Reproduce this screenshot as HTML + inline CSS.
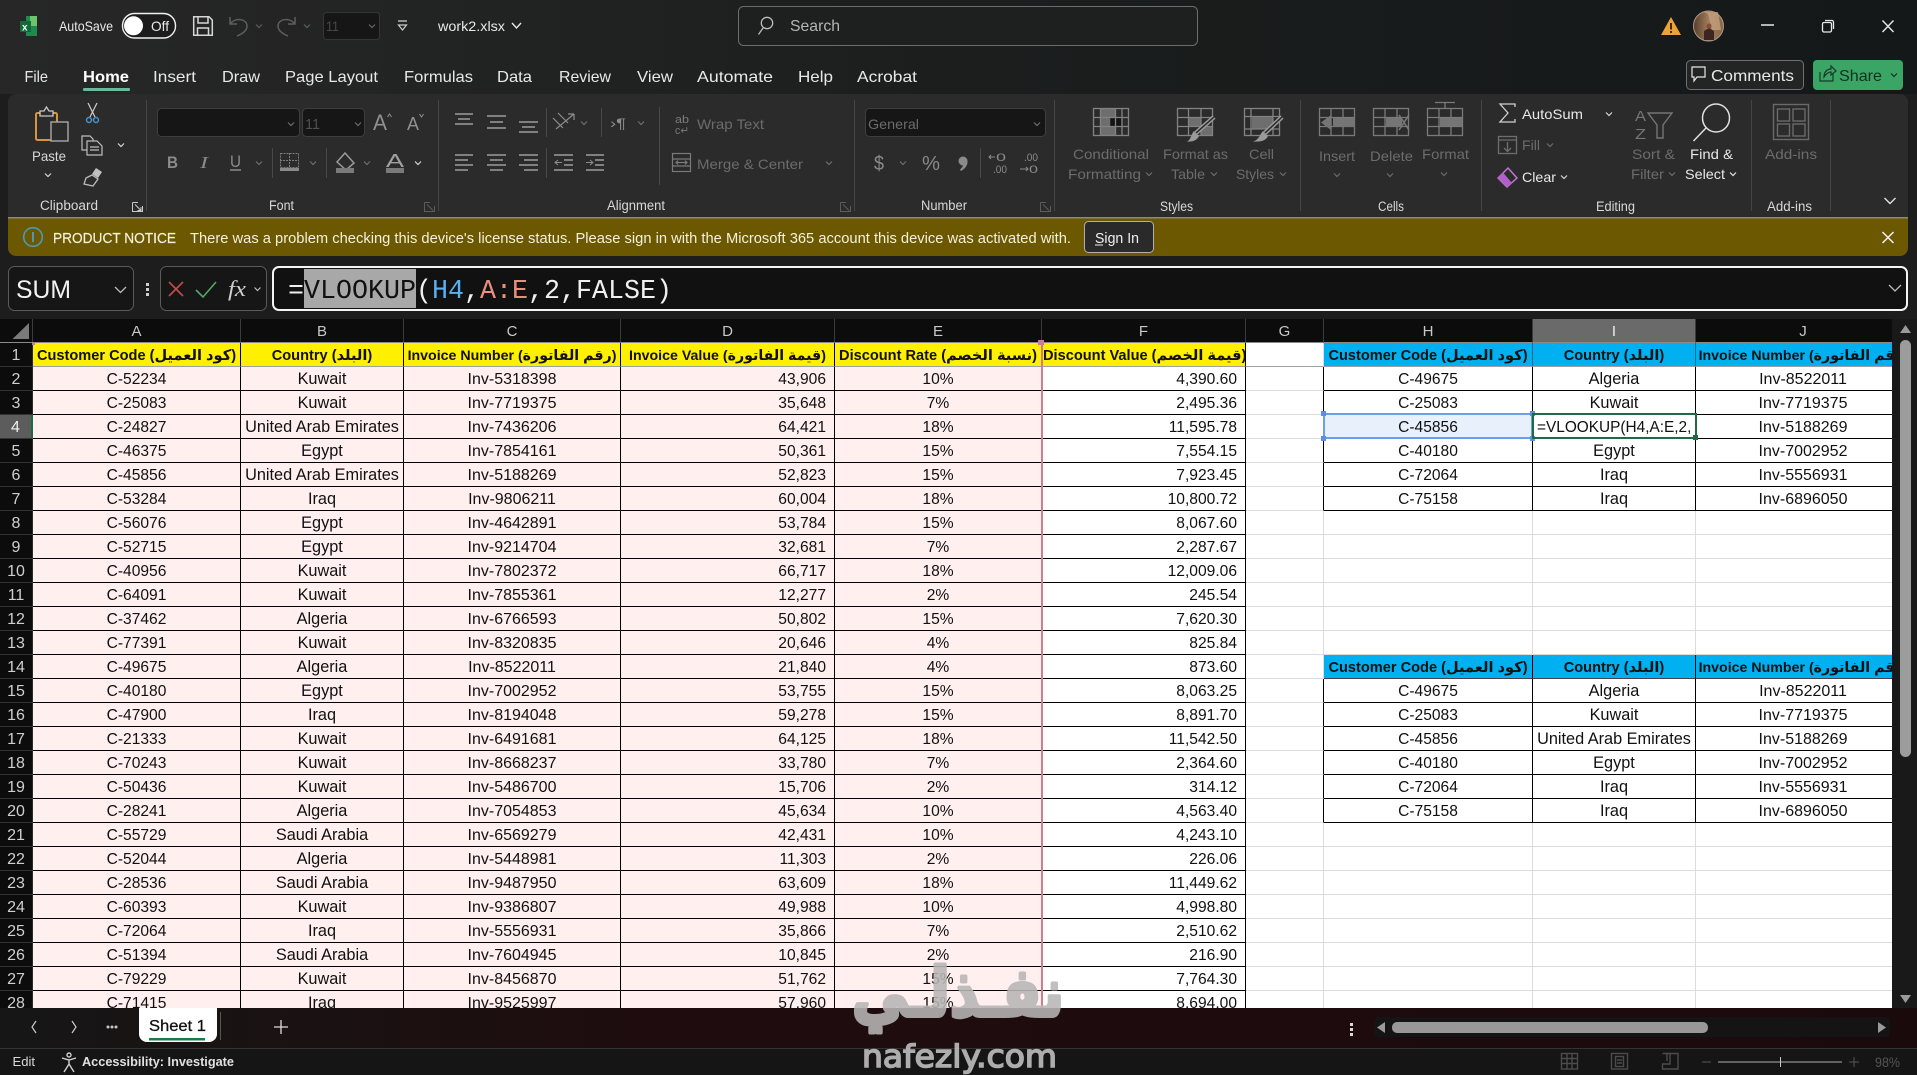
<!DOCTYPE html>
<html><head><meta charset="utf-8"><title>work2.xlsx</title>
<style>
html,body{margin:0;padding:0;background:#1e1e1e;width:1917px;height:1075px;overflow:hidden}
#g{position:absolute;left:0;top:319px;border-collapse:separate;border-spacing:0;table-layout:fixed;width:1911px;background:#fff}
#g td,#g th{height:24px;box-sizing:border-box;padding:2px 0 0;overflow:hidden;white-space:nowrap;font:15.6px "Liberation Sans","DejaVu Sans",sans-serif;color:#111;text-align:center;vertical-align:middle;border-right:1px solid #000;border-bottom:1px solid #000}
#g thead th{background:#0c0c0c;color:#c8c8c8;font-size:15px;font-weight:400;border-right:1px solid #3c3c3c;border-bottom:1px solid #8a8a8a}
#g thead th.s{background:#6a6a6a;color:#eee}
#g tbody th{background:#0c0c0c;color:#cfcfcf;font-weight:400;font-size:16px;border-right:1px solid #2a2a2a;border-bottom:1px solid #333}
#g tbody th.s{background:#5c5c5c;color:#f0f0f0;border-right:2px solid #1d6b42}
#g tbody td:nth-child(-n+6){background:#ffefef}
#g tbody td:nth-child(3),#g tbody td:nth-child(10){font-size:16.3px}
#g tbody td:nth-child(4),#g tbody td:nth-child(11){font-size:16px}
#g tbody td:nth-child(5),#g tbody td:nth-child(7){text-align:right;padding-right:8px}
#g tbody td:nth-child(n+8){border-color:#dcdcdc}
#g tr.t td:nth-child(n+9){border-color:#000}
#g tr.t td:nth-child(8){border-right-color:#000}
#g tr.y td{background:#ffef00;font-weight:700;font-size:14.6px;color:#111;border-bottom-color:#a0a0a0;text-align:center;padding:2px 1px 0}
#g tr.y td:nth-child(8){background:#fff;border-right-color:#dcdcdc}
#g tr.y td:nth-child(n+9){background:#00b0f0;border-bottom-color:#a0a0a0;border-right-color:#0a6a90}
#g tr.b td:nth-child(n+9){background:#00b0f0;font-weight:700;font-size:14.6px;border-color:#000;border-bottom-color:#444;padding:2px 1px 0}
#g tr.y td:nth-child(4),#g tr.y td:nth-child(5),#g tr.y td:nth-child(11),#g tr.b td:nth-child(11){font-size:14.2px}
#g td.h4{background:#e8f0fc!important}
#g td.i4{text-align:left!important;padding-left:4px!important;font-size:15.4px!important}
svg{position:absolute;left:0;top:0;font-family:"Liberation Sans","DejaVu Sans",sans-serif}
.w{fill:#e8e8e8}.d{fill:#6c6c6c}.l{fill:#d8d8d8}
text{font-size:14px}
.tb{font-size:15.6px;fill:#e8e8e8}
</style></head><body>
<table id="g"><colgroup><col style="width:33px"><col style="width:208px"><col style="width:163px"><col style="width:217px"><col style="width:214px"><col style="width:207px"><col style="width:204px"><col style="width:78px"><col style="width:209px"><col style="width:163px"><col style="width:215px"></colgroup>
<thead><tr><th></th><th>A</th><th>B</th><th>C</th><th>D</th><th>E</th><th>F</th><th>G</th><th>H</th><th class="s">I</th><th>J</th></tr></thead>
<tbody>
<tr class="y"><th>1</th><td>Customer Code (كود العميل)</td><td>Country (البلد)</td><td>Invoice Number (رقم الفاتورة)</td><td>Invoice Value (قيمة الفاتورة)</td><td>Discount Rate (نسبة الخصم)</td><td>Discount Value (قيمة الخصم)</td><td></td><td>Customer Code (كود العميل)</td><td>Country (البلد)</td><td>Invoice Number (رقم الفاتورة)</td></tr>
<tr class="t"><th>2</th><td>C-52234</td><td>Kuwait</td><td>Inv-5318398</td><td>43,906</td><td>10%</td><td>4,390.60</td><td></td><td>C-49675</td><td>Algeria</td><td>Inv-8522011</td></tr>
<tr class="t"><th>3</th><td>C-25083</td><td>Kuwait</td><td>Inv-7719375</td><td>35,648</td><td>7%</td><td>2,495.36</td><td></td><td>C-25083</td><td>Kuwait</td><td>Inv-7719375</td></tr>
<tr class="t"><th class="s">4</th><td>C-24827</td><td>United Arab Emirates</td><td>Inv-7436206</td><td>64,421</td><td>18%</td><td>11,595.78</td><td></td><td class="h4">C-45856</td><td class="i4">=VLOOKUP(H4,A:E,2,</td><td>Inv-5188269</td></tr>
<tr class="t"><th>5</th><td>C-46375</td><td>Egypt</td><td>Inv-7854161</td><td>50,361</td><td>15%</td><td>7,554.15</td><td></td><td>C-40180</td><td>Egypt</td><td>Inv-7002952</td></tr>
<tr class="t"><th>6</th><td>C-45856</td><td>United Arab Emirates</td><td>Inv-5188269</td><td>52,823</td><td>15%</td><td>7,923.45</td><td></td><td>C-72064</td><td>Iraq</td><td>Inv-5556931</td></tr>
<tr class="t"><th>7</th><td>C-53284</td><td>Iraq</td><td>Inv-9806211</td><td>60,004</td><td>18%</td><td>10,800.72</td><td></td><td>C-75158</td><td>Iraq</td><td>Inv-6896050</td></tr>
<tr><th>8</th><td>C-56076</td><td>Egypt</td><td>Inv-4642891</td><td>53,784</td><td>15%</td><td>8,067.60</td><td></td><td></td><td></td><td></td></tr>
<tr><th>9</th><td>C-52715</td><td>Egypt</td><td>Inv-9214704</td><td>32,681</td><td>7%</td><td>2,287.67</td><td></td><td></td><td></td><td></td></tr>
<tr><th>10</th><td>C-40956</td><td>Kuwait</td><td>Inv-7802372</td><td>66,717</td><td>18%</td><td>12,009.06</td><td></td><td></td><td></td><td></td></tr>
<tr><th>11</th><td>C-64091</td><td>Kuwait</td><td>Inv-7855361</td><td>12,277</td><td>2%</td><td>245.54</td><td></td><td></td><td></td><td></td></tr>
<tr><th>12</th><td>C-37462</td><td>Algeria</td><td>Inv-6766593</td><td>50,802</td><td>15%</td><td>7,620.30</td><td></td><td></td><td></td><td></td></tr>
<tr><th>13</th><td>C-77391</td><td>Kuwait</td><td>Inv-8320835</td><td>20,646</td><td>4%</td><td>825.84</td><td></td><td></td><td></td><td></td></tr>
<tr class="b"><th>14</th><td>C-49675</td><td>Algeria</td><td>Inv-8522011</td><td>21,840</td><td>4%</td><td>873.60</td><td></td><td>Customer Code (كود العميل)</td><td>Country (البلد)</td><td>Invoice Number (رقم الفاتورة)</td></tr>
<tr class="t"><th>15</th><td>C-40180</td><td>Egypt</td><td>Inv-7002952</td><td>53,755</td><td>15%</td><td>8,063.25</td><td></td><td>C-49675</td><td>Algeria</td><td>Inv-8522011</td></tr>
<tr class="t"><th>16</th><td>C-47900</td><td>Iraq</td><td>Inv-8194048</td><td>59,278</td><td>15%</td><td>8,891.70</td><td></td><td>C-25083</td><td>Kuwait</td><td>Inv-7719375</td></tr>
<tr class="t"><th>17</th><td>C-21333</td><td>Kuwait</td><td>Inv-6491681</td><td>64,125</td><td>18%</td><td>11,542.50</td><td></td><td>C-45856</td><td>United Arab Emirates</td><td>Inv-5188269</td></tr>
<tr class="t"><th>18</th><td>C-70243</td><td>Kuwait</td><td>Inv-8668237</td><td>33,780</td><td>7%</td><td>2,364.60</td><td></td><td>C-40180</td><td>Egypt</td><td>Inv-7002952</td></tr>
<tr class="t"><th>19</th><td>C-50436</td><td>Kuwait</td><td>Inv-5486700</td><td>15,706</td><td>2%</td><td>314.12</td><td></td><td>C-72064</td><td>Iraq</td><td>Inv-5556931</td></tr>
<tr class="t"><th>20</th><td>C-28241</td><td>Algeria</td><td>Inv-7054853</td><td>45,634</td><td>10%</td><td>4,563.40</td><td></td><td>C-75158</td><td>Iraq</td><td>Inv-6896050</td></tr>
<tr><th>21</th><td>C-55729</td><td>Saudi Arabia</td><td>Inv-6569279</td><td>42,431</td><td>10%</td><td>4,243.10</td><td></td><td></td><td></td><td></td></tr>
<tr><th>22</th><td>C-52044</td><td>Algeria</td><td>Inv-5448981</td><td>11,303</td><td>2%</td><td>226.06</td><td></td><td></td><td></td><td></td></tr>
<tr><th>23</th><td>C-28536</td><td>Saudi Arabia</td><td>Inv-9487950</td><td>63,609</td><td>18%</td><td>11,449.62</td><td></td><td></td><td></td><td></td></tr>
<tr><th>24</th><td>C-60393</td><td>Kuwait</td><td>Inv-9386807</td><td>49,988</td><td>10%</td><td>4,998.80</td><td></td><td></td><td></td><td></td></tr>
<tr><th>25</th><td>C-72064</td><td>Iraq</td><td>Inv-5556931</td><td>35,866</td><td>7%</td><td>2,510.62</td><td></td><td></td><td></td><td></td></tr>
<tr><th>26</th><td>C-51394</td><td>Saudi Arabia</td><td>Inv-7604945</td><td>10,845</td><td>2%</td><td>216.90</td><td></td><td></td><td></td><td></td></tr>
<tr><th>27</th><td>C-79229</td><td>Kuwait</td><td>Inv-8456870</td><td>51,762</td><td>15%</td><td>7,764.30</td><td></td><td></td><td></td><td></td></tr>
<tr><th>28</th><td>C-71415</td><td>Iraq</td><td>Inv-9525997</td><td>57,960</td><td>15%</td><td>8,694.00</td><td></td><td></td><td></td><td></td></tr>
</tbody></table>

<svg width="1917" height="1075" viewBox="0 0 1917 1075" xmlns="http://www.w3.org/2000/svg">
<defs>
<g id="c"><path d="M-3 -1.5L0 1.5L3 -1.5" fill="none" stroke-width="1.2"/></g>
<linearGradient id="tg" x1="0" x2="1" y1="0" y2="0"><stop offset="0" stop-color="#272727"/><stop offset=".5" stop-color="#1c1e1e"/><stop offset="1" stop-color="#141818"/></linearGradient>
<linearGradient id="sb" x1="0" x2="1" y1="0" y2="0"><stop offset="0" stop-color="#161616"/><stop offset=".35" stop-color="#1f0c0e"/><stop offset="1" stop-color="#1b0a0c"/></linearGradient>
<linearGradient id="av" x1="0" x2="1" y1="0" y2="0"><stop offset="0" stop-color="#5a3c28"/><stop offset=".5" stop-color="#a07c5c"/><stop offset="1" stop-color="#8a6444"/></linearGradient>
</defs>

<!-- grid overlays -->
<rect x="1041" y="343" width="2" height="666" fill="#d47c8c"/>
<rect x="1038" y="340" width="6" height="5" fill="#d47c8c"/>
<rect x="32" y="342" width="3" height="3" fill="#c08090"/>
<rect x="1324" y="414" width="208" height="24" fill="none" stroke="#6d9eeb" stroke-width="2"/>
<g fill="#5b8fe6"><rect x="1321" y="411" width="5" height="5"/><rect x="1530" y="411" width="5" height="5"/><rect x="1321" y="436" width="5" height="5"/><rect x="1530" y="436" width="5" height="5"/></g>
<rect x="1533" y="414" width="163" height="24" fill="none" stroke="#1d6b42" stroke-width="2"/>
<rect x="1693" y="435" width="5" height="5" fill="#1d6b42"/>
<path d="M12.5 339L29 323V339Z" fill="#7a7a7a"/>

<!-- scrollbar -->
<rect x="1892" y="319" width="25" height="690" fill="#191919"/>
<path d="M1900 333L1905.5 325L1911 333Z" fill="#9a9a9a"/>
<rect x="1900" y="340" width="11" height="417" rx="5.5" fill="#9c9c9c"/>
<path d="M1900 995L1905.5 1003L1911 995Z" fill="#9a9a9a"/>

<!-- title bar -->
<rect width="1917" height="94" fill="url(#tg)"/>
<rect y="94" width="1917" height="225" fill="#1d1d1d"/>
<path d="M26 16H37V36H26Z" fill="#1f8a50"/><path d="M30 16H37V26H30Z" fill="#6ec46a"/><rect x="20" y="21" width="11" height="11" fill="#106a3a"/><text x="22" y="30.5" font-size="10" font-weight="700" style="font-size:10px;fill:#fff">x</text>
<text x="59" y="31" class="w" textLength="54" lengthAdjust="spacingAndGlyphs">AutoSave</text>
<rect x="122.5" y="13.5" width="53" height="24.5" rx="12" fill="#1c1c1c" stroke="#f0f0f0" stroke-width="1.4"/>
<circle cx="133.5" cy="25.8" r="9.5" fill="#fff"/>
<text x="151" y="31" class="w" textLength="18" lengthAdjust="spacingAndGlyphs">Off</text>
<g fill="none" stroke="#d6d6d6" stroke-width="1.5"><path d="M193.7 16.7H209L212.3 20V35.3H193.7Z"/><path d="M198 17V23H208V17"/><path d="M197.5 35V28H208.5V35"/></g>
<g fill="none" stroke="#5e5e5e" stroke-width="1.5"><path d="M230 17V24H237"/><path d="M230.5 23.5C236 17 247 19 247 26C247 31 242 34 237 36"/><use href="#c" x="259" y="26" stroke="#5e5e5e"/><path d="M295 17V24H288"/><path d="M294.5 23.5C289 17 278 19 278 26C278 31 283 34 288 36"/><use href="#c" x="307" y="26" stroke="#5e5e5e"/></g>
<rect x="323.5" y="12.5" width="56" height="27" rx="3" fill="#161616" stroke="#363636"/>
<text x="326" y="31" class="d" style="fill:#484848" textLength="13" lengthAdjust="spacingAndGlyphs">11</text>
<use href="#c" x="372" y="26" stroke="#666"/>
<path d="M398 21H407" stroke="#ccc" stroke-width="1.3"/><path d="M398.5 25L402.5 30L406.5 25Z" fill="none" stroke="#ccc" stroke-width="1.2"/>
<text x="438" y="31" class="w" textLength="67" lengthAdjust="spacingAndGlyphs">work2.xlsx</text>
<path d="M512 23L516.5 28L521 23" fill="none" stroke="#e8e8e8" stroke-width="1.4"/>
<rect x="738.5" y="6.5" width="459" height="39" rx="5" fill="#1e2020" stroke="#6c6c6c"/>
<circle cx="767" cy="23" r="5.7" fill="none" stroke="#bbb" stroke-width="1.3"/><path d="M763 28L758.5 34.5" stroke="#bbb" stroke-width="1.3"/>
<text x="790" y="31" style="font-size:16px;fill:#b4b4b4" textLength="50" lengthAdjust="spacingAndGlyphs">Search</text>
<path d="M1671 17L1681 35H1661Z" fill="#eea236"/><rect x="1670" y="23" width="2" height="6.5" fill="#3a2a10"/><rect x="1670" y="31" width="2" height="2" fill="#3a2a10"/>
<circle cx="1708.5" cy="26" r="15" fill="url(#av)" stroke="#a89a8c"/><path d="M1704 12H1718L1721 30H1712L1708 14Z" fill="#c8a684" opacity=".7"/><path d="M1704 40V31L1709 28L1714 31V40Z" fill="#3c2620"/><circle cx="1709" cy="26" r="2.5" fill="#8a4a3a"/>
<path d="M1761 25H1774" stroke="#e8e8e8" stroke-width="1.5"/>
<g fill="none" stroke="#e8e8e8" stroke-width="1.3"><rect x="1822.5" y="22.5" width="9" height="9.5" rx="1.5"/><path d="M1825 20.5H1832a1.5 1.5 0 0 1 1.5 1.5V29"/></g>
<path d="M1882.5 20.5L1893.5 32M1893.5 20.5L1882.5 32" stroke="#e8e8e8" stroke-width="1.4"/>

<!-- tabs -->
<g>
<text x="24.5" y="82" class="tb" textLength="23.5" lengthAdjust="spacingAndGlyphs">File</text>
<text x="83" y="82" class="tb" style="fill:#fff;font-weight:700" textLength="46" lengthAdjust="spacingAndGlyphs">Home</text>
<text x="153" y="82" class="tb" textLength="43" lengthAdjust="spacingAndGlyphs">Insert</text>
<text x="222" y="82" class="tb" textLength="38" lengthAdjust="spacingAndGlyphs">Draw</text>
<text x="285" y="82" class="tb" textLength="93" lengthAdjust="spacingAndGlyphs">Page Layout</text>
<text x="404" y="82" class="tb" textLength="69" lengthAdjust="spacingAndGlyphs">Formulas</text>
<text x="497" y="82" class="tb" textLength="35" lengthAdjust="spacingAndGlyphs">Data</text>
<text x="559" y="82" class="tb" textLength="52" lengthAdjust="spacingAndGlyphs">Review</text>
<text x="637" y="82" class="tb" textLength="36" lengthAdjust="spacingAndGlyphs">View</text>
<text x="697" y="82" class="tb" textLength="76" lengthAdjust="spacingAndGlyphs">Automate</text>
<text x="798" y="82" class="tb" textLength="35" lengthAdjust="spacingAndGlyphs">Help</text>
<text x="857" y="82" class="tb" textLength="60" lengthAdjust="spacingAndGlyphs">Acrobat</text>
</g>
<rect x="83" y="88" width="47" height="3" rx="1" fill="#6cb89a"/>
<rect x="1686.5" y="60.5" width="117" height="29" rx="4" fill="#232525" stroke="#707070"/>
<path d="M1692 67H1705V77H1697L1694 81V77H1692Z" fill="none" stroke="#e8e8e8" stroke-width="1.2"/>
<text x="1711" y="81" class="tb" textLength="83" lengthAdjust="spacingAndGlyphs">Comments</text>
<rect x="1813" y="60" width="90" height="30" rx="4" fill="#3aa565"/>
<path d="M1820 72V81H1833V74M1824 77C1824 71 1828 69 1831 69V66L1836 71L1831 75V72C1828 72 1826 74 1824 77Z" fill="none" stroke="#183a28" stroke-width="1.2"/>
<text x="1839" y="81" style="font-size:15.6px;fill:#153020" textLength="43" lengthAdjust="spacingAndGlyphs">Share</text>
<use href="#c" x="1894" y="75" stroke="#153020"/>

<!-- ribbon -->
<path d="M16 94H1900a8 8 0 0 1 8 8V217H8V102a8 8 0 0 1 8-8Z" fill="#2b2b2b"/>
<g stroke="#454545"><path d="M146.5 100V211M438.5 100V211M854.5 100V211M1054.5 100V211M1300.5 100V211M1481.5 100V211M1751.5 100V211M1830.5 100V211"/></g>
<!-- group labels -->
<g class="l" style="fill:#d8d8d8">
<text x="40" y="210" style="font-size:13.5px" textLength="58" lengthAdjust="spacingAndGlyphs">Clipboard</text>
<text x="269" y="210" style="font-size:13.5px" textLength="25" lengthAdjust="spacingAndGlyphs">Font</text>
<text x="607" y="210" style="font-size:13.5px" textLength="58" lengthAdjust="spacingAndGlyphs">Alignment</text>
<text x="921" y="210" style="font-size:13.5px" textLength="46" lengthAdjust="spacingAndGlyphs">Number</text>
<text x="1160" y="211" style="font-size:13.5px" textLength="33" lengthAdjust="spacingAndGlyphs">Styles</text>
<text x="1378" y="211" style="font-size:13.5px" textLength="26" lengthAdjust="spacingAndGlyphs">Cells</text>
<text x="1596" y="211" style="font-size:13.5px" textLength="39" lengthAdjust="spacingAndGlyphs">Editing</text>
<text x="1767" y="211" style="font-size:13.5px" textLength="45" lengthAdjust="spacingAndGlyphs">Add-ins</text>
</g>
<!-- launchers -->
<g fill="none" stroke-width="1"><g stroke="#c8c8c8"><path d="M132.5 202.5V211.5H142.5V206M132.5 202.5H138M135 204.5L141 210.5M141 207V210.5H137.5"/></g><g stroke="#5c5c5c"><path d="M424.5 202.5V211.5H434.5V206M424.5 202.5H430M427 204.5L433 210.5"/><path d="M840.5 202.5V211.5H850.5V206M840.5 202.5H846M843 204.5L849 210.5"/><path d="M1040.5 202.5V211.5H1050.5V206M1040.5 202.5H1046M1043 204.5L1049 210.5"/></g></g>

<!-- clipboard -->
<rect x="36" y="113" width="21" height="27" rx="1.5" fill="none" stroke="#d8943a" stroke-width="2"/>
<path d="M40 116V111H44L46.5 107L49 111H53V116Z" fill="#2b2b2b" stroke="#c8c8c8" stroke-width="1.3"/>
<rect x="51" y="122" width="17" height="19" fill="#2b2b2b" stroke="#a8a8a8" stroke-width="1.4"/>
<text x="32" y="161" class="l" textLength="34" lengthAdjust="spacingAndGlyphs">Paste</text>
<use href="#c" x="48" y="175" stroke="#d8d8d8"/>
<g fill="none" stroke="#cfcfcf" stroke-width="1.2"><path d="M88 103L95 117M97 103L90 117"/></g><g fill="none" stroke="#4a90c8" stroke-width="1.5"><circle cx="89" cy="120" r="2.5"/><circle cx="96" cy="120" r="2.5"/></g>
<g fill="none" stroke="#bdbdbd" stroke-width="1.2"><path d="M82 136H90L93 139V150H82Z"/><path d="M87 141H97L102 146V155H87Z" fill="#2b2b2b"/><path d="M90 147H99M90 150H99"/></g>
<use href="#c" x="121" y="145" stroke="#d8d8d8"/>
<path d="M96 168L102 172L98 178L92 174Z" fill="#c0c0c0"/><path d="M92 175L98 179L93 186L84 184L86 178Z" fill="#2b2b2b" stroke="#bbb" stroke-width="1.3"/>

<!-- font -->
<rect x="157.5" y="108.5" width="142" height="28" rx="4" fill="#161616" stroke="#3e3e3e"/>
<use href="#c" x="291" y="124" stroke="#6c6c6c"/>
<rect x="302.5" y="108.5" width="62" height="28" rx="4" fill="#161616" stroke="#3e3e3e"/>
<text x="305" y="129" class="d" style="font-size:15px;fill:#505050" textLength="15" lengthAdjust="spacingAndGlyphs">11</text>
<use href="#c" x="358" y="124" stroke="#6c6c6c"/>
<g style="fill:#9a9a9a"><text x="373" y="130" style="font-size:22px;fill:#909090" textLength="14" lengthAdjust="spacingAndGlyphs">A</text><text x="407" y="130" style="font-size:18px;fill:#909090" textLength="12" lengthAdjust="spacingAndGlyphs">A</text></g>
<path d="M387.5 117L389.5 114L391.5 117M419.5 114L421.5 117L423.5 114" fill="none" stroke="#909090"/>
<text x="167" y="168" style="font-size:17px;font-weight:700;fill:#8a8a8a" textLength="11" lengthAdjust="spacingAndGlyphs">B</text>
<text x="200" y="168" style="font-size:17px;font-style:italic;font-family:'Liberation Serif';fill:#8a8a8a" textLength="8" lengthAdjust="spacingAndGlyphs">I</text>
<text x="230" y="167" style="font-size:17px;fill:#8a8a8a" textLength="11" lengthAdjust="spacingAndGlyphs">U</text><path d="M230 170H241" stroke="#8a8a8a" stroke-width="1.5"/>
<g stroke="#6c6c6c"><use href="#c" x="259" y="163" stroke="#6c6c6c"/><use href="#c" x="313" y="163" stroke="#6c6c6c"/><use href="#c" x="367" y="163" stroke="#6c6c6c"/><path d="M272.5 148V178M326.5 148V178" stroke="#484848"/></g>
<g fill="none" stroke="#7e7e7e" stroke-dasharray="2 1"><rect x="280.5" y="153.5" width="18" height="14"/><path d="M289.5 153V168M280 160.5H299"/></g><rect x="280" y="168" width="19" height="3" fill="#8a8a8a"/>
<path d="M345 153L354 163L346 170L337 162Z" fill="none" stroke="#9a9a9a" stroke-width="1.5"/><rect x="336" y="168" width="18" height="5" fill="#7a7a7a"/>
<text x="386" y="167" style="font-size:18px;fill:#a0a0a0" textLength="18" lengthAdjust="spacingAndGlyphs">A</text><rect x="386" y="168" width="18" height="5" fill="#7a7a7a"/>
<use href="#c" x="418" y="163" stroke="#d8d8d8"/>

<!-- alignment -->
<g stroke="#8c8c8c" stroke-width="1.8" fill="none">
<path d="M455 114H473M458 119H470M455 124H473"/>
<path d="M487 116H506M490 122H503M487 128H506"/>
<path d="M519 122H538M522 127H535M519 132H538"/>
<path d="M455 155H473M455 160H468M455 165H473M455 170H468"/>
<path d="M487 155H506M490 160H503M487 165H506M490 170H503"/>
<path d="M519 155H538M524 160H538M519 165H538M524 170H538"/>
<path d="M554 155H573M564 160H573M564 165H573M554 170H573"/>
<path d="M586 155H604M595 160H604M595 165H604M586 170H604"/>
</g>
<path d="M562 162.500H555M558 160L555 162.500L558 165M586 162.500H593M590 160L593 162.500L590 165" fill="none" stroke="#8c8c8c" stroke-width="1"/>
<path d="M546.5 108V137M601.5 108V137M546.5 148V178M659.5 107V185" stroke="#484848"/>
<g fill="none" stroke="#8c8c8c" stroke-width="1.2"><path d="M553 118L563 128M558 113L568 123M556 129L574 114M574 114H568M574 114V120"/></g>
<use href="#c" x="584" y="123" stroke="#6c6c6c"/>
<text x="610" y="128" style="font-size:14px;fill:#8c8c8c" textLength="16" lengthAdjust="spacingAndGlyphs">›¶</text>
<use href="#c" x="641" y="123" stroke="#6c6c6c"/>
<text x="675" y="123" style="font-size:11px;fill:#7a7a7a" textLength="14" lengthAdjust="spacingAndGlyphs">ab</text><text x="675" y="134" style="font-size:11px;fill:#7a7a7a" textLength="14" lengthAdjust="spacingAndGlyphs">c↵</text>
<text x="697" y="129" class="d" textLength="67" lengthAdjust="spacingAndGlyphs">Wrap Text</text>
<g fill="none" stroke="#7a7a7a" stroke-width="1.2"><rect x="672.5" y="153.5" width="18" height="18"/><path d="M672 159H691M672 166H691M676 162.5H687M678 160.5L676 162.5L678 164.5M685 160.5L687 162.5L685 164.5"/></g>
<text x="697" y="169" class="d" textLength="106" lengthAdjust="spacingAndGlyphs">Merge &amp; Center</text>
<use href="#c" x="829" y="163" stroke="#6c6c6c"/>

<!-- number -->
<rect x="865.5" y="108.5" width="180" height="28" rx="4" fill="#161616" stroke="#3e3e3e"/>
<text x="868" y="129" class="d" textLength="51" lengthAdjust="spacingAndGlyphs">General</text>
<use href="#c" x="1037" y="124" stroke="#6c6c6c"/>
<text x="874" y="170" style="font-size:20px;fill:#8a8a8a" textLength="10" lengthAdjust="spacingAndGlyphs">$</text>
<use href="#c" x="903" y="163" stroke="#6c6c6c"/>
<text x="922" y="170" style="font-size:20px;fill:#8a8a8a" textLength="18" lengthAdjust="spacingAndGlyphs">%</text>
<circle cx="963" cy="161" r="4.5" fill="#8a8a8a"/><path d="M967.500 161C968 165 965 169 961 171L960 169.500C962 168 963 166 963 164Z" fill="#8a8a8a"/>
<path d="M980.5 148V178" stroke="#484848"/>
<g style="fill:#8a8a8a"><text x="996" y="161" style="font-size:11px;fill:#8a8a8a" textLength="10" lengthAdjust="spacingAndGlyphs">0</text><text x="993" y="173" style="font-size:11px;fill:#8a8a8a" textLength="14" lengthAdjust="spacingAndGlyphs">.00</text><text x="1024" y="161" style="font-size:11px;fill:#8a8a8a" textLength="14" lengthAdjust="spacingAndGlyphs">.00</text><text x="1029" y="173" style="font-size:11px;fill:#8a8a8a" textLength="9" lengthAdjust="spacingAndGlyphs">0</text></g>
<path d="M995 157H989M991 155L989 157L991 159M1020 169H1028M1026 167L1028 169L1026 171" fill="none" stroke="#8a8a8a"/>

<!-- styles -->
<g fill="#6e6e6e">
<rect x="1101" y="109" width="14" height="8"/><rect x="1101" y="117" width="9" height="9"/><rect x="1101" y="127" width="14" height="8"/>
<rect x="1189" y="118" width="12" height="9"/><rect x="1201" y="127" width="11" height="8"/>
<rect x="1252" y="117" width="21" height="12"/>
</g>
<rect x="1111" y="118" width="10" height="8" fill="#141414"/>
<g fill="none" stroke="#828282" stroke-width="1.3">
<rect x="1093.5" y="108.5" width="35" height="27"/><path d="M1093 117.5H1129M1093 126.5H1129M1100.500 108V136M1115.500 108V136M1122 108V136"/>
<rect x="1177.5" y="108.5" width="35" height="27"/><path d="M1177 117.5H1213M1177 126.5H1213M1188.500 108V136M1201 108V136"/>
<rect x="1244.5" y="108.5" width="35" height="27"/><path d="M1244 116.500H1280M1244 129H1280M1251 108V136M1273 108V136"/>
</g>
<g fill="none"><path d="M1214 117L1196 133" stroke="#9a9a9a" stroke-width="4.500"/><path d="M1214 117L1196 133" stroke="#2b2b2b" stroke-width="1.500"/><path d="M1282 117L1265 133" stroke="#9a9a9a" stroke-width="4.500"/><path d="M1282 117L1265 133" stroke="#2b2b2b" stroke-width="1.500"/></g>
<path d="M1194 131L1199 136C1197 141 1191 142 1187 141.500C1191 140 1191 134 1194 131Z" fill="#9a9a9a"/>
<path d="M1263 131L1268 136C1266 141 1260 142 1253 141.500C1259 140 1260 134 1263 131Z" fill="#9a9a9a"/>

<!-- cells -->
<g fill="none" stroke="#7a7a7a" stroke-width="1.3">
<rect x="1319.5" y="108.5" width="35" height="27"/><path d="M1319 117.5H1355M1319 126.5H1355M1331 108V136M1343 108V136"/>
<rect x="1373.5" y="108.5" width="35" height="27"/><path d="M1373 117.5H1409M1373 126.5H1409M1385 108V136M1397 108V136"/>
<rect x="1427.5" y="108.5" width="35" height="27"/><path d="M1427 117.5H1463M1427 126.5H1463M1439 108V136M1451 108V136M1435 102.5H1455M1445 102V108"/>
</g>
<g fill="#757575">
<rect x="1333" y="118" width="22" height="9"/><path d="M1321 122.5L1331 115V130Z"/>
<rect x="1386" y="118" width="16" height="9"/>
<rect x="1440" y="118" width="22" height="8"/>
</g>
<path d="M1399 115L1409 130M1409 115L1399 130" stroke="#777" stroke-width="1.6"/>
<g class="d">
<text x="1073" y="159" class="d" textLength="76" lengthAdjust="spacingAndGlyphs">Conditional</text>
<text x="1068" y="179" class="d" textLength="73" lengthAdjust="spacingAndGlyphs">Formatting</text>
<text x="1163" y="159" class="d" textLength="65" lengthAdjust="spacingAndGlyphs">Format as</text>
<text x="1171" y="179" class="d" textLength="34" lengthAdjust="spacingAndGlyphs">Table</text>
<text x="1249" y="159" class="d" textLength="25" lengthAdjust="spacingAndGlyphs">Cell</text>
<text x="1236" y="179" class="d" textLength="38" lengthAdjust="spacingAndGlyphs">Styles</text>
<text x="1319" y="161" class="d" textLength="36" lengthAdjust="spacingAndGlyphs">Insert</text>
<text x="1370" y="161" class="d" textLength="43" lengthAdjust="spacingAndGlyphs">Delete</text>
<text x="1422" y="159" class="d" textLength="47" lengthAdjust="spacingAndGlyphs">Format</text>
</g>
<use href="#c" x="1149" y="174" stroke="#6c6c6c"/><use href="#c" x="1214" y="174" stroke="#6c6c6c"/><use href="#c" x="1283" y="174" stroke="#6c6c6c"/>
<use href="#c" x="1337" y="175" stroke="#6c6c6c"/><use href="#c" x="1390" y="175" stroke="#6c6c6c"/><use href="#c" x="1444" y="174" stroke="#6c6c6c"/>

<!-- editing -->
<path d="M1515 107V104H1500L1508 113L1500 122H1515V119" fill="none" stroke="#cfcfcf" stroke-width="1.3"/>
<text x="1522" y="119" class="w" textLength="61" lengthAdjust="spacingAndGlyphs">AutoSum</text>
<use href="#c" x="1609" y="114" stroke="#d8d8d8"/>
<g fill="none" stroke="#6e6e6e" stroke-width="1.3"><rect x="1498.5" y="136.5" width="18" height="17"/><path d="M1498 140H1517M1507.5 142V151M1504 148L1507.5 151.5L1511 148"/></g>
<text x="1522" y="150" class="d" textLength="18" lengthAdjust="spacingAndGlyphs">Fill</text>
<use href="#c" x="1550" y="145" stroke="#6c6c6c"/>
<path d="M1508 168L1517 178L1507 187L1498 178Z" fill="none" stroke="#c678d8" stroke-width="1.4"/><path d="M1498 178L1503 172.5L1512 183L1507 187Z" fill="#b060c8"/>
<text x="1522" y="182" class="w" textLength="34" lengthAdjust="spacingAndGlyphs">Clear</text>
<use href="#c" x="1564" y="177" stroke="#d8d8d8"/>
<text x="1635" y="121" style="font-size:15px;fill:#757575" textLength="11" lengthAdjust="spacingAndGlyphs">A</text>
<text x="1635" y="139" style="font-size:15px;fill:#757575" textLength="11" lengthAdjust="spacingAndGlyphs">Z</text>
<path d="M1648 113H1672L1663 125V138H1657V125Z" fill="none" stroke="#757575" stroke-width="1.4"/>
<text x="1632" y="159" class="d" textLength="43" lengthAdjust="spacingAndGlyphs">Sort &amp;</text>
<text x="1631" y="179" class="d" textLength="33" lengthAdjust="spacingAndGlyphs">Filter</text>
<use href="#c" x="1672" y="174" stroke="#6c6c6c"/>
<ellipse cx="1716" cy="118" rx="13.5" ry="14" fill="none" stroke="#e0e0e0" stroke-width="1.5"/><path d="M1706 128L1693.5 141" stroke="#e0e0e0" stroke-width="1.5"/>
<text x="1690" y="159" class="w" textLength="43" lengthAdjust="spacingAndGlyphs">Find &amp;</text>
<text x="1685" y="179" class="w" textLength="40" lengthAdjust="spacingAndGlyphs">Select</text>
<use href="#c" x="1733" y="174" stroke="#e8e8e8"/>
<g fill="none" stroke="#6a6a6a" stroke-width="1.4"><rect x="1773.5" y="104.5" width="35" height="35"/><rect x="1777.5" y="109" width="12" height="12"/><rect x="1793" y="109" width="12" height="12"/><rect x="1777.5" y="124" width="12" height="12"/><rect x="1793" y="124" width="12" height="12"/></g>
<text x="1765" y="159" class="d" textLength="52" lengthAdjust="spacingAndGlyphs">Add-ins</text>
<path d="M1884.5 198L1890 203.5L1895.5 198" fill="none" stroke="#e0e0e0" stroke-width="1.4"/>

<!-- notice -->
<path d="M8 217H1908V248a8 8 0 0 1 -8 8H16a8 8 0 0 1 -8 -8Z" fill="#6b5800"/>
<rect x="8" y="217" width="1900" height="1.5" fill="#8c8a70"/>
<circle cx="33" cy="237" r="9.3" fill="none" stroke="#4d9ab0" stroke-width="1.6"/><rect x="32" y="232" width="2" height="10" fill="#4d9ab0"/>
<text x="53" y="243" style="font-size:14.5px;fill:#f4f0dc;font-weight:400;stroke:#f4f0dc;stroke-width:.2" textLength="123" lengthAdjust="spacingAndGlyphs">PRODUCT NOTICE</text>
<text x="190" y="243" style="font-size:14.5px;fill:#f4f0dc" textLength="881" lengthAdjust="spacingAndGlyphs">There was a problem checking this device's license status. Please sign in with the Microsoft 365 account this device was activated with.</text>
<rect x="1084.5" y="221.5" width="69" height="31" rx="4" fill="#2a2a2a" stroke="#b0b0b0"/>
<text x="1095" y="243" style="font-size:14.5px;fill:#f0f0f0" textLength="44" lengthAdjust="spacingAndGlyphs">Sign In</text><path d="M1095 245H1103" stroke="#f0f0f0"/>
<path d="M1882.5 232L1893.5 243M1893.5 232L1882.5 243" stroke="#f0f0f0" stroke-width="1.5"/>

<!-- formula bar -->
<rect x="8.5" y="266.5" width="125" height="44" rx="6" fill="#161616" stroke="#5a5a5a"/>
<text x="16" y="298" style="font-size:25px;fill:#f2f2f2" textLength="55" lengthAdjust="spacingAndGlyphs">SUM</text>
<path d="M115 287L120.500 292.500L126 287" fill="none" stroke="#bbb" stroke-width="1.3"/>
<g fill="#d0d0d0"><rect x="146" y="283" width="3" height="3"/><rect x="146" y="288" width="3" height="3"/><rect x="146" y="293" width="3" height="3"/></g>
<rect x="160.5" y="266.5" width="106" height="44" rx="6" fill="#161616" stroke="#5a5a5a"/>
<path d="M169 282L183 296M183 282L169 296" stroke="#c84a4a" stroke-width="1.6"/>
<path d="M196 290L203 297L216 282" fill="none" stroke="#55a866" stroke-width="1.6"/>
<text x="228" y="296" style="font-size:22px;font-family:'Liberation Serif';font-style:italic;fill:#d0d0d0" textLength="18" lengthAdjust="spacingAndGlyphs">fx</text>
<use href="#c" x="257.500" y="289" stroke="#bbb"/>
<rect x="273" y="267" width="1634" height="43" rx="6" fill="#111" stroke="#f4f4f4" stroke-width="2"/>
<rect x="304" y="269" width="112" height="39" fill="#a8a8a8"/>
<text x="288" y="298" xml:space="preserve" style="font-family:'Liberation Mono',monospace;font-size:26.67px;fill:#f0f0f0">=<tspan fill="#111">VLOOKUP</tspan>(<tspan fill="#5ab0f0">H4</tspan>,<tspan fill="#e98f80">A:E</tspan>,2,FALSE)</text>
<path d="M1889 285L1895 291L1901 285" fill="none" stroke="#bbb" stroke-width="1.3"/>

<!-- sheet tabs -->
<rect y="1008" width="1917" height="40" fill="url(#sb)"/>
<path d="M36 1021L32 1027L36 1033M72 1021L76 1027L72 1033" fill="none" stroke="#ccc" stroke-width="1.2"/>
<g fill="#c8c8c8"><circle cx="108" cy="1027" r="1.5"/><circle cx="112" cy="1027" r="1.5"/><circle cx="116" cy="1027" r="1.5"/></g>
<path d="M139 1008H217V1034a8 8 0 0 1 -8 8H147a8 8 0 0 1 -8 -8Z" fill="#fff"/>
<text x="149" y="1031" style="font-size:16px;fill:#111;stroke:#111;stroke-width:.3" textLength="57" lengthAdjust="spacingAndGlyphs">Sheet 1</text>
<rect x="149" y="1038" width="56" height="2.500" fill="#1d7a48"/>
<path d="M220.500 1012V1040" stroke="#555"/>
<path d="M274 1027H288M281 1020V1034" stroke="#ddd" stroke-width="1.3"/>
<g fill="#d8d8d8"><rect x="1350" y="1023" width="3" height="3"/><rect x="1350" y="1028" width="3" height="3"/><rect x="1350" y="1033" width="3" height="3"/></g>
<rect x="1374" y="1017" width="516" height="20" rx="4" fill="#141414"/>
<path d="M1385 1022V1033L1377 1027.500Z" fill="#9a9a9a"/>
<rect x="1392" y="1022" width="316" height="11" rx="5" fill="#989898"/>
<path d="M1878 1022V1033L1886 1027.500Z" fill="#9a9a9a"/>

<!-- status bar -->
<rect y="1048" width="1917" height="27" fill="#151515"/>
<rect y="1048" width="1917" height="1" fill="#333"/>
<text x="12.500" y="1066" style="font-size:13px;fill:#d8d8d8" textLength="22.500" lengthAdjust="spacingAndGlyphs">Edit</text>
<g fill="none" stroke="#d0d0d0" stroke-width="1.4"><circle cx="69" cy="1055" r="2"/><path d="M62 1058L69 1060L76 1058M69 1060V1064L64 1072M69 1064L74 1072"/></g>
<text x="82" y="1066" style="font-size:13px;font-weight:700;fill:#e0e0e0" textLength="152" lengthAdjust="spacingAndGlyphs">Accessibility: Investigate</text>
<g fill="none" stroke="#4c4c4c" stroke-width="1.4"><rect x="1561.500" y="1053.500" width="16" height="15.500"/><path d="M1567 1053V1069M1572 1053V1069M1561 1058.500H1578M1561 1063.500H1578"/><rect x="1611.500" y="1053.500" width="16" height="15.500"/><rect x="1615.500" y="1056.500" width="8" height="10"/><path d="M1617 1060H1622M1617 1063H1622"/><path d="M1662.500 1053.500H1678V1069H1662.500V1064H1670V1053.500M1667 1053.500V1061"/></g>
<path d="M1702 1062H1711M1849 1062H1859M1854 1057V1067" stroke="#555" stroke-width="1"/>
<path d="M1718 1062H1842" stroke="#b0b0b0"/>
<path d="M1780.500 1057V1067" stroke="#c8c8c8"/>
<text x="1875" y="1067" style="font-size:14px;fill:#555" textLength="25" lengthAdjust="spacingAndGlyphs">98%</text>

<!-- watermark -->
<g opacity=".88">
<text x="958" y="1016" text-anchor="middle" direction="rtl" style="font-family:'DejaVu Sans',sans-serif;font-weight:700;font-size:68px;fill:#b8b6b6;stroke:#b8b6b6;stroke-width:4;stroke-linejoin:round" textLength="212" lengthAdjust="spacingAndGlyphs">نفـذلـي</text>
<text x="862" y="1067" style="font-family:'DejaVu Sans',sans-serif;font-size:31px;fill:#c4c2c2;stroke:#c4c2c2;stroke-width:1.5" textLength="195" lengthAdjust="spacingAndGlyphs">nafezly.com</text>
</g>
</svg>
</body></html>
